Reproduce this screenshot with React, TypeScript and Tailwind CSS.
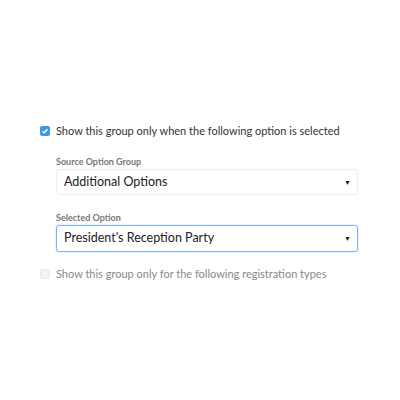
import React from "react";

export default function App() {
  return (
    <div className="w-[400px] h-[400px] bg-white" style={{ fontFamily: "Lato, 'Open Sans', sans-serif" }}>
      <div className="pt-[124px] pl-[40px] pr-[42px] flex flex-col">
        <div className="flex items-center gap-[6px] h-[14px]">
          <div className="w-[10px] h-[10px] rounded-[2px] bg-[#3b99e8] flex items-center justify-center">
            <svg width="8" height="8" viewBox="0 0 8 8"><path d="M1.5 4.2 L3.2 5.8 L6.5 2.2" stroke="white" strokeWidth="1.4" fill="none" /></svg>
          </div>
          <span className="text-[11px] leading-[14px] text-[#333]">Show this group only when the following option is selected</span>
        </div>
        <div className="pl-[16px] flex flex-col">
          <div className="mt-[18px] text-[9px] leading-[12px] font-bold text-[#777]">Source Option Group</div>
          <div className="mt-[1px] h-[26px] border border-[#ececec] rounded-[3px] flex items-center justify-between pl-[7px] pr-[6px]">
            <span className="text-[12.5px] text-[#222]">Additional Options</span>
            <span className="text-[7px] text-[#222]">▼</span>
          </div>
          <div className="mt-[17px] text-[9px] leading-[12px] font-bold text-[#777]">Selected Option</div>
          <div className="mt-[1px] h-[27px] border border-[#7ab2f0] rounded-[3px] flex items-center justify-between pl-[7px] pr-[6px] shadow-[0_0_2px_#a9d0f7]">
            <span className="text-[12.5px] text-[#222]">President's Reception Party</span>
            <span className="text-[7px] text-[#222]">▼</span>
          </div>
        </div>
        <div className="mt-[15px] flex items-center gap-[6px] h-[14px]">
          <div className="w-[10px] h-[10px] rounded-[2px] bg-[#f1f2f4] border border-[#e6e8ec]" />
          <span className="text-[11px] leading-[14px] text-[#888]">Show this group only for the following registration types</span>
        </div>
      </div>
    </div>
  );
}
